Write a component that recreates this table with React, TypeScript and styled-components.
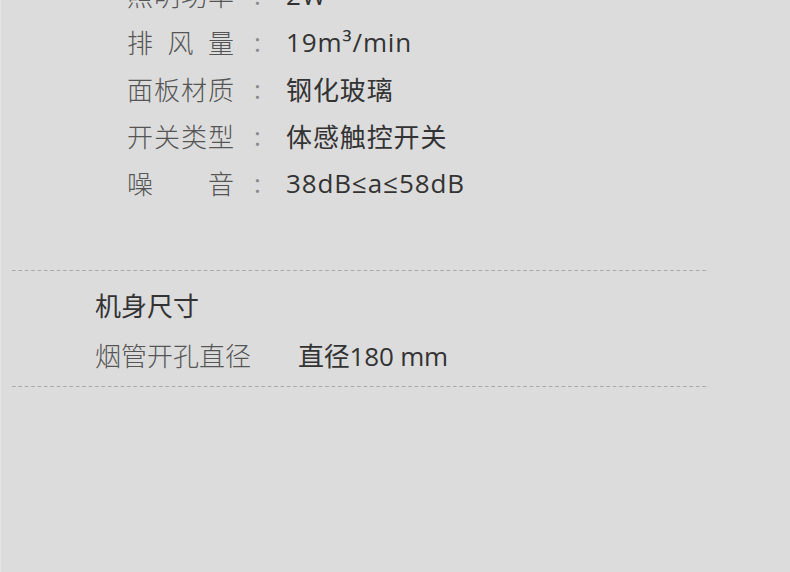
import React from 'react';
import styled, { createGlobalStyle } from 'styled-components';

const GlobalStyle = createGlobalStyle`
  html, body {
    margin: 0;
    padding: 0;
    background: #dcdcdc;
  }
  body {
    font-family: "Open Sans", "Noto Sans CJK SC", sans-serif;
    overflow: hidden;
  }
`;

interface Spec {
  label: string;
  value: string;
}

const specs: Spec[] = [
  { label: '照明功率', value: '2W' },
  { label: '排风量', value: '19m³/min' },
  { label: '面板材质', value: '钢化玻璃' },
  { label: '开关类型', value: '体感触控开关' },
  { label: '噪音', value: '38dB≤a≤58dB' },
];

const App: React.FC = () => {
  return (
    <Page>
      <GlobalStyle />
      <SpecList>
        {specs.map((s) => (
          <SpecRow key={s.label}>
            <Label>{s.label}</Label>
            <Colon>:</Colon>
            <SpecValue>{s.value}</SpecValue>
          </SpecRow>
        ))}
      </SpecList>
      <Divider />
      <Section>
        <SectionTitle>机身尺寸</SectionTitle>
        <SizeRow>
          <SizeLabel>烟管开孔直径</SizeLabel>
          <Value>直径180 mm</Value>
        </SizeRow>
      </Section>
      <Divider />
    </Page>
  );
};

export default App;

const Page = styled.div`
  width: 790px;
  height: 572px;
  background: #dcdcdc;
  border-left: 1px solid #e4e4e4;
  box-sizing: border-box;
  overflow: hidden;
`;

const SpecList = styled.div`
  margin-top: -29px;
  padding-left: 126px;
  padding-bottom: 64px;
`;

const SpecRow = styled.div`
  display: flex;
  align-items: center;
  height: 47px;
  font-size: 26px;
`;

const Label = styled.span`
  width: 107px;
  color: #555;
  text-align: justify;
  text-align-last: justify;
  font-weight: 300;
`;

const Colon = styled.span`
  width: 52px;
  padding-left: 20px;
  box-sizing: border-box;
  color: #8a8a8a;
`;

const Value = styled.span`
  color: #333;
  letter-spacing: -0.2px;
`;

const SpecValue = styled(Value)`
  letter-spacing: 0.9px;
`;

const Divider = styled.div`
  margin-left: 11px;
  width: 697px;
  height: 1px;
  background-image: linear-gradient(to right, #a9a9a9 4px, transparent 4px);
  background-size: 6.4px 1px;
`;

const Section = styled.div`
  padding: 12px 0 8px 94px;
`;

const SectionTitle = styled.div`
  height: 47px;
  line-height: 47px;
  font-size: 26px;
  color: #333;
`;

const SizeRow = styled.div`
  display: flex;
  align-items: center;
  height: 47px;
  margin-top: 1px;
  font-size: 26px;
`;

const SizeLabel = styled.span`
  width: 203px;
  color: #555;
  font-weight: 300;
`;
